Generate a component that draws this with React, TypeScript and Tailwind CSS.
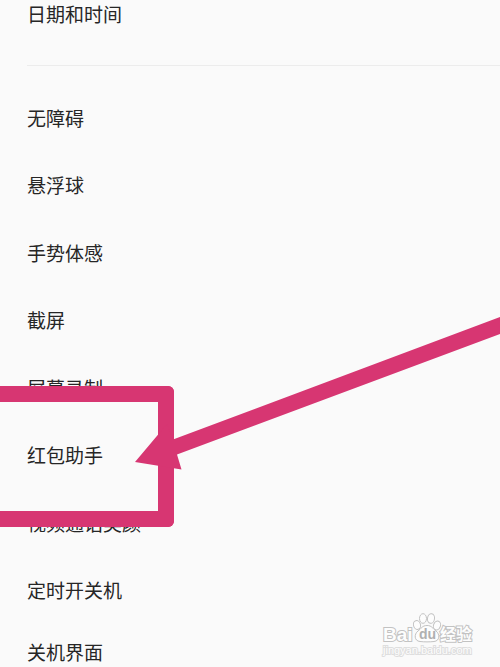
const settings = [
  '无障碍',
  '悬浮球',
  '手势体感',
  '截屏',
  '屏幕录制',
  '红包助手',
  '视频通话美颜',
  '定时开关机',
  '关机界面',
];

function HighlightArrow() {
  return (
    <svg
      className="absolute top-[300px] left-[130px]"
      width="370"
      height="180"
      viewBox="130 300 370 180"
      fill="#d73672"
      aria-hidden="true"
    >
      <path d="M135 462 L167 424 L173 439.500 L500 317 V334 L177 454.500 L181.500 469.500 Z" />
    </svg>
  );
}

function Watermark() {
  return (
    <svg
      className="absolute right-6 bottom-1 font-['Liberation_Sans','Noto_Sans_CJK_SC',sans-serif]"
      width="96"
      height="56"
      viewBox="380 607 96 56"
      fill="#fdfdfd"
      stroke="#c2c2c2"
      strokeWidth="1"
    >
      <text x="383" y="641" fontSize="19" fontWeight="700" paintOrder="stroke" strokeWidth="2">
        Bai
      </text>
      <ellipse cx="417" cy="625" rx="3.500" ry="4.500" transform="rotate(-15 417 625)" />
      <ellipse cx="423" cy="618.500" rx="3.500" ry="4.800" />
      <ellipse cx="431" cy="618.500" rx="3.500" ry="4.800" transform="rotate(8 431 618.500)" />
      <ellipse cx="437" cy="625.500" rx="3.500" ry="4.500" transform="rotate(20 437 625.500)" />
      <path d="M427 625.500 C422 625.500 421 629 418 631 C414 634 414 641 420 641.500 C424 642 430 642 434 641.500 C440 641 440 634 436 631 C433 629 432 625.500 427 625.500 Z" />
      <text x="419" y="639" fontSize="14" fontWeight="700" fill="#b0b0b0" stroke="none">
        du
      </text>
      <text x="440" y="640" fontSize="16" fontWeight="700" paintOrder="stroke" strokeWidth="2">
        经验
      </text>
      <text x="383" y="654" fontSize="11" paintOrder="stroke" stroke="#dedede" strokeWidth="2">
        jingyan.baidu.com
      </text>
    </svg>
  );
}

export default function App() {
  return (
    <main className="relative h-screen overflow-hidden bg-[#fafafa] pl-[27px] font-['Noto_Sans_CJK_SC',sans-serif] text-[19px] leading-7 text-[#262626]">
      <section className="h-[66px] border-b border-[#ececec]">日期和时间</section>
      <ul className="mt-[18px]">
        {settings.map((name) => (
          <li key={name} className="flex h-[67px] items-center even:h-[68px] last:h-14">
            {name}
          </li>
        ))}
      </ul>
      <div className="absolute top-[386px] left-0 h-[141px] w-[174px] rounded-r-md border-16 border-l-0 border-[#d73672]" />
      <HighlightArrow />
      <Watermark />
    </main>
  );
}
